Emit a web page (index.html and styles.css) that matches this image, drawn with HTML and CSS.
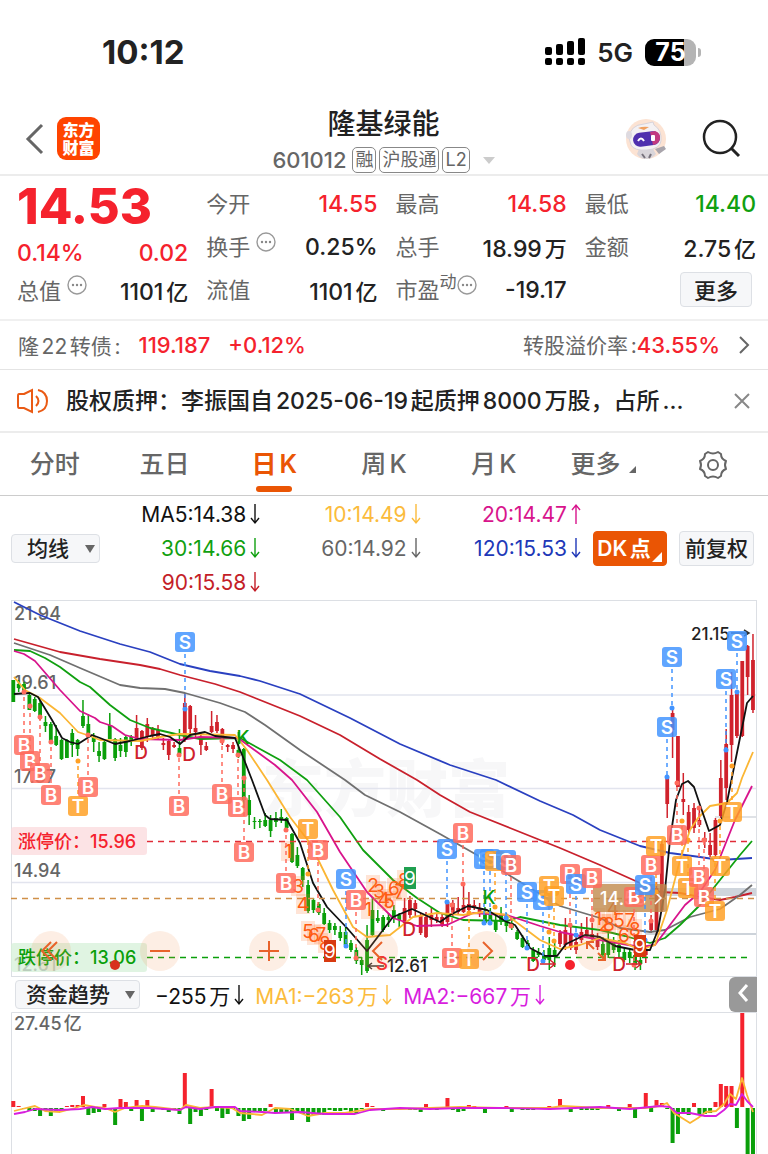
FILE: index.html
```html
<!DOCTYPE html>
<html lang="zh-CN">
<head>
  <meta charset="UTF-8" />
  <meta name="viewport" content="width=device-width, initial-scale=1.0" />
  <title>隆基绿能 601012</title>
  <link rel="stylesheet" href="styles.css">
</head>
<body>
  <div class="status">
    <span class="time">10:12</span>
    <div class="status-right">
      <svg width="40" height="28" viewBox="0 0 40 28">
        <rect x="0" y="9" width="7" height="8" rx="2"/><rect x="11" y="6" width="7" height="11" rx="2"/>
        <rect x="22" y="3" width="7" height="14" rx="2"/><rect x="33" y="0" width="7" height="17" rx="2"/>
        <rect x="0" y="20" width="7" height="7" rx="2"/><rect x="11" y="20" width="7" height="7" rx="2"/>
        <rect x="22" y="20" width="7" height="7" rx="2"/><rect x="33" y="20" width="7" height="7" rx="2"/>
      </svg>
      <span class="net">5G</span>
      <span class="battery">75</span>
    </div>
  </div>

  <header class="header">
    <div class="header-left">
      <button class="icon-btn" aria-label="返回">
        <svg width="20" height="32" viewBox="0 0 20 32"><path d="M17 2L3 16l14 14" fill="none" stroke="#666" stroke-width="3"/></svg>
      </button>
      <a class="logo" href="#">东方<br>财富</a>
    </div>
    <div class="header-title">
      <h1>隆基绿能</h1>
      <div class="code">
        <span>601012</span><i class="chip">融</i><i class="chip">沪股通</i><i class="chip">L2</i><b class="caret"></b>
      </div>
    </div>
    <div class="header-right">
      <button class="icon-btn" aria-label="助手">
        <svg width="42" height="42" viewBox="0 0 42 42">
          <circle cx="21" cy="21" r="20" fill="#fce3d3"/>
          <path d="M14 31q7-3 14 0l3 5q-4 5-10 5t-9-5z" fill="#d9d5da"/>
          <path d="M30 31l9-3 2 3-7 5z" fill="#a9a5ac"/>
          <path d="M17 36l3 4M26 36l-2 4" stroke="#77727c" stroke-width="2"/>
          <path d="M4 20Q5 7 19 6l9-2 1 3q8 5 7 16-1 8-14 9-13 1-16-5z" fill="#f4f1f3" stroke="#d8d3da"/>
          <path d="M13 10q5-2 11-1l-5 3z" fill="#f0a060"/>
          <ellipse cx="4" cy="17" rx="3" ry="4" fill="#dedae0"/>
          <rect x="8" y="14" width="27" height="14" rx="7" fill="#4f2fae" transform="rotate(-7 21 21)"/>
          <path d="M25 14l5-1q6 2 5 8-1 5-7 6z" fill="#c23a80"/>
          <path d="M13 23q3-5 6 0" fill="none" stroke="#fff" stroke-width="2"/>
          <rect x="26" y="17" width="4" height="6" rx="1" fill="#fff"/>
        </svg>
      </button>
      <button class="icon-btn" aria-label="搜索">
        <svg width="40" height="40" viewBox="0 0 40 40"><circle cx="18" cy="18" r="16" fill="none" stroke="#222" stroke-width="2.5"/><path d="M29 29l8 8" stroke="#222" stroke-width="3"/></svg>
      </button>
    </div>
  </header>

  <section class="quote">
    <div class="col first">
      <div class="price">14.53</div>
      <div class="row red"><span>0.14%</span><span>0.02</span></div>
      <div class="row"><label>总值<svg class="tip"><use href="#dots"/></svg></label><span>1101<small>亿</small></span></div>
    </div>
    <div class="col">
      <div class="row"><label>今开</label><span class="red">14.55</span></div>
      <div class="row"><label>换手<svg class="tip"><use href="#dots"/></svg></label><span>0.25%</span></div>
      <div class="row"><label>流值</label><span>1101<small>亿</small></span></div>
    </div>
    <div class="col">
      <div class="row"><label>最高</label><span class="red">14.58</span></div>
      <div class="row"><label>总手</label><span>18.99<small>万</small></span></div>
      <div class="row"><label>市盈<sup>动</sup><svg class="tip near"><use href="#dots"/></svg></label><span>-19.17</span></div>
    </div>
    <div class="col">
      <div class="row"><label>最低</label><span class="green">14.40</span></div>
      <div class="row"><label>金额</label><span>2.75<small>亿</small></span></div>
      <div class="row end"><button class="btn more">更多</button></div>
    </div>
  </section>

  <a class="bond" href="#">
    <span class="grey">隆22转债:</span>
    <b class="red">119.187</b>
    <b class="red">+0.12%</b>
    <span class="grey bond-rate">转股溢价率:<b class="red">43.55%</b></span>
    <svg width="12" height="20" viewBox="0 0 12 20"><path d="M2 2l8 8-8 8" fill="none" stroke="#666" stroke-width="2"/></svg>
  </a>

  <div class="notice">
    <svg width="32" height="26" viewBox="0 0 32 26" fill="none" stroke="#ea5a14" stroke-width="2">
      <path d="M7 6L15 2v22l-8-4H2q-1 0-1-2V8q0-2 1-2zM15 2v22"/><path d="M19 8q5 5 0 10M21 2q9 2 9 11t-9 11"/>
    </svg>
    <p>股权质押：李振国自2025-06-19起质押8000万股，占所...</p>
    <button class="icon-btn" aria-label="关闭">
      <svg width="16" height="16" viewBox="0 0 16 16"><path d="M1 1l14 14M15 1L1 15" stroke="#888" stroke-width="2"/></svg>
    </button>
  </div>

  <nav class="tabs">
    <a href="#">分时</a>
    <a href="#">五日</a>
    <a href="#" class="active">日K</a>
    <a href="#">周K</a>
    <a href="#">月K</a>
    <a href="#" class="has-more">更多</a>
    <button class="icon-btn" aria-label="设置">
      <svg width="30" height="30" viewBox="0 0 30 30" fill="none" stroke="#666" stroke-width="2" stroke-linejoin="round">
        <path d="M10 2q5 3 10 0l3 2q0 5 5 7-2 4 0 8-5 2-5 7l-3 2q-5-3-10 0l-3-2q0-5-5-7 2-4 0-8 5-2 5-7z"/><circle cx="15" cy="15" r="5"/>
      </svg>
    </button>
  </nav>

  <div class="ma">
    <span class="select"><select aria-label="主图指标"><option>均线</option></select></span>
    <div class="ma-grid">
      <span class="c5">MA5:14.38<svg class="arr"><use href="#down"/></svg></span>
      <span class="c10">10:14.49<svg class="arr"><use href="#down"/></svg></span>
      <span class="c20">20:14.47<svg class="arr"><use href="#up"/></svg></span>
      <span class="c30">30:14.66<svg class="arr"><use href="#down"/></svg></span>
      <span class="c60">60:14.92<svg class="arr"><use href="#down"/></svg></span>
      <span class="c120">120:15.53<svg class="arr"><use href="#down"/></svg></span>
      <span class="c90">90:15.58<svg class="arr"><use href="#down"/></svg></span>
    </div>
    <button class="btn dk">DK点</button>
    <button class="btn fq">前复权</button>
  </div>

  <div class="chart">
    <svg id="kline" viewBox="11 600 746 377"></svg>
    <div class="controls">
      <button aria-label="最早"><svg viewBox="0 0 40 40"><path d="M20 11l-9 9 9 9M26 11l-9 9 9 9"/></svg></button>
      <button aria-label="缩小"><svg viewBox="0 0 40 40"><path d="M10 20h20"/></svg></button>
      <button aria-label="放大"><svg viewBox="0 0 40 40"><path d="M10 20h20M20 10v20"/></svg></button>
      <button aria-label="左移"><svg viewBox="0 0 40 40"><path d="M24 11l-9 9 9 9"/></svg></button>
      <button aria-label="右移"><svg viewBox="0 0 40 40"><path d="M16 11l9 9-9 9"/></svg></button>
      <button aria-label="全屏"><svg viewBox="0 0 40 40"><path d="M18 18l-7-7M11 18v-7h7M22 22l7 7M22 29h7v-7"/></svg></button>
    </div>
  </div>

  <div class="fund-bar">
    <span class="select wide"><select aria-label="副图指标"><option>资金趋势</option></select></span>
    <span class="c5">−255万<svg class="arr"><use href="#down"/></svg></span>
    <span class="c10">MA1:−263万<svg class="arr"><use href="#down"/></svg></span>
    <span class="cm2">MA2:−667万<svg class="arr"><use href="#down"/></svg></span>
    <button class="fold" aria-label="展开"><svg width="12" height="18" viewBox="0 0 12 18"><path d="M10 1L3 9l7 8" fill="none" stroke="#fff" stroke-width="3"/></svg></button>
  </div>
  <div class="chart fund">
    <svg id="fund" viewBox="11 1012 746 142"></svg>
  </div>

  <svg class="defs" aria-hidden="true">
    <symbol id="dots" viewBox="0 0 20 20"><circle cx="10" cy="10" r="9" fill="none" stroke="#999" stroke-width="1.4"/><circle cx="6" cy="10" r="1.2" fill="#888"/><circle cx="10" cy="10" r="1.2" fill="#888"/><circle cx="14" cy="10" r="1.2" fill="#888"/></symbol>
    <symbol id="down" viewBox="0 0 10 22"><path d="M5 1v19M1 15l4 5 4-5" fill="none" stroke="currentColor" stroke-width="1.4"/></symbol>
    <symbol id="up" viewBox="0 0 10 22"><path d="M5 21V2M1 7l4-5 4 5" fill="none" stroke="currentColor" stroke-width="1.4"/></symbol>
  </svg>
  <script src="chart.js"></script>
</body>
</html>
```

FILE: styles.css
```css
* {
  box-sizing: border-box;
}
body {
  margin: 0;
  background: #fff;
  color: #222;
  font-family: Inter, "Noto Sans CJK SC", sans-serif;
  text-autospace: normal;
  overflow: hidden;
}
button {
  font-family: inherit;
  cursor: pointer;
}
a {
  color: inherit;
  text-decoration: none;
}
.red { color: #f5222d; }
.green { color: #10a010; }
.grey { color: #666; }
.defs {
  display: none;
}
.icon-btn {
  display: flex;
  padding: 0;
  border: none;
  background: none;
}

/* status bar */
.status {
  display: flex;
  justify-content: space-between;
  align-items: center;
  height: 100px;
  padding: 4px 68px 0 102px;
}
.time {
  font-size: 33px;
  font-weight: 700;
}
.status-right {
  display: flex;
  align-items: center;
  gap: 12px;
}
.net {
  font-size: 26px;
  font-weight: 600;
}
.battery {
  position: relative;
  width: 51px;
  height: 27px;
  margin-right: 4px;
  border-radius: 9px;
  background: linear-gradient(90deg, #000 76%, #b4b4b4 76%);
  color: #fff;
  font-size: 25px;
  font-weight: 700;
  line-height: 27px;
  text-align: center;
}
.battery::after {
  content: "";
  position: absolute;
  right: -5px;
  top: 9px;
  width: 3px;
  height: 9px;
  border-radius: 0 3px 3px 0;
  background: #b4b4b4;
}

/* header */
.header {
  display: grid;
  grid-template-columns: 1fr auto 1fr;
  align-items: center;
  height: 76px;
  padding: 0 26px 4px 25px;
  border-bottom: 2px solid #ececec;
}
.header-left,
.header-right {
  display: flex;
  align-items: center;
}
.header-left {
  gap: 12px;
}
.header-right {
  justify-content: flex-end;
  gap: 35px;
}
.logo {
  width: 43px;
  height: 43px;
  padding-top: 4px;
  border-radius: 9px;
  background: #ff4400;
  color: #fff;
  font-size: 16px;
  font-weight: 900;
  line-height: 18px;
  text-align: center;
}
.header-title {
  padding-top: 5px;
  text-align: center;
}
h1 {
  margin: 0;
  font-size: 28px;
  font-weight: 500;
  line-height: 38px;
}
.code {
  display: flex;
  align-items: center;
  gap: 3px;
  height: 34px;
  color: #666;
  font-size: 22px;
  font-weight: 500;
}
.code span {
  margin-right: 3px;
}
.chip {
  height: 26px;
  padding: 0 2px;
  border: 1px solid #888;
  border-radius: 5px;
  font-size: 18px;
  font-style: normal;
  font-weight: 400;
  line-height: 24px;
}
.caret {
  margin-left: 10px;
  border: 6px solid transparent;
  border-top: 7px solid #ccc;
  border-bottom: 0;
}

/* quote */
.quote {
  display: grid;
  grid-template-columns: repeat(4, 1fr);
  gap: 18px;
  height: 145px;
  padding: 6px 12px 0 17px;
  border-bottom: 2px solid #f0f0f0;
  font-size: 23px;
  font-weight: 500;
}
.row {
  display: flex;
  justify-content: space-between;
  align-items: center;
  height: 43px;
  white-space: nowrap;
}
.row label {
  display: flex;
  align-items: center;
  margin-bottom: 3px;
  color: #666;
  font-size: 22px;
  font-weight: 400;
}
.row small {
  font-size: 22px;
}
.row.end {
  justify-content: flex-end;
}
.first .row:last-child {
  height: 32px;
}
.price {
  height: 49px;
  color: #f5222d;
  font-size: 49px;
  font-weight: 800;
  line-height: 50px;
}
.tip {
  width: 20px;
  height: 20px;
  margin: 0 0 7px 6px;
}
.tip.near {
  margin-left: 0;
}
sup {
  font-size: 17px;
  line-height: 20px;
  margin-bottom: 12px;
}
.btn {
  padding: 0;
  border: 1px solid #dde0e5;
  border-radius: 4px;
  background: #f6f7f9;
  color: #222;
  font-weight: 500;
}
.more {
  width: 72px;
  height: 35px;
  margin-right: 4px;
  padding-bottom: 4px;
  font-size: 22px;
}

/* convertible bond */
.bond {
  display: flex;
  align-items: center;
  gap: 18px;
  height: 49px;
  padding: 0 18px;
  border-bottom: 1px solid #e4e4e4;
  font-size: 21px;
}
.bond b {
  font-size: 22px;
  font-weight: 500;
}
.bond-rate {
  margin: 0 0 3px auto;
}

/* notice */
.notice {
  display: flex;
  align-items: center;
  height: 63px;
  padding: 0 18px 0 17px;
  border-bottom: 2px solid #ececec;
}
.notice p {
  flex: 1;
  margin: 0 0 4px 17px;
  overflow: hidden;
  font-size: 23px;
  font-weight: 500;
  white-space: nowrap;
}

/* tabs */
.tabs {
  display: grid;
  grid-template-columns: repeat(7, 1fr);
  height: 63px;
  border-bottom: 1px solid #ccc;
  color: #666;
  font-size: 25px;
  font-weight: 500;
  line-height: 63px;
  text-align: center;
}
.tabs .icon-btn {
  align-items: center;
  justify-content: center;
}
.tabs .active {
  position: relative;
  color: #ea5504;
  font-weight: 600;
}
.tabs .active::after {
  content: "";
  position: absolute;
  left: 50%;
  bottom: 4px;
  width: 36px;
  height: 6px;
  margin-left: -18px;
  border-radius: 3px;
  background: #ea5504;
}
.has-more::after {
  content: "";
  display: inline-block;
  margin-left: 9px;
  border-left: 7px solid transparent;
  border-bottom: 7px solid #666;
}

/* moving averages */
.ma {
  display: flex;
  align-items: center;
  height: 104px;
  padding: 0 14px 0 11px;
}
.select {
  position: relative;
  width: 89px;
}
.select select {
  width: 100%;
  height: 29px;
  padding: 0 0 0 15px;
  border: 1px solid #dde0e5;
  border-radius: 4px;
  background: #f6f7f9;
  color: #222;
  font: 500 21px Inter, "Noto Sans CJK SC", sans-serif;
  line-height: 27px;
  appearance: none;
}
.select::after {
  content: "";
  position: absolute;
  right: 5px;
  top: 11px;
  border: 5px solid transparent;
  border-top: 8px solid #666;
  border-bottom: 0;
}
.select.wide {
  width: 125px;
  margin-right: 15px;
}
.wide select {
  padding-left: 10px;
}
.ma-grid {
  flex: 1;
  display: grid;
  grid-template-columns: repeat(3, 1fr);
  grid-auto-rows: 34px;
  font-size: 21px;
}
.ma-grid span {
  display: flex;
  align-items: center;
  justify-content: flex-end;
}
.arr {
  width: 10px;
  height: 22px;
  margin-left: 4px;
}
.c5 { color: #111; }
.c10 { color: #fbbb3c; }
.c20 { color: #d8148c; }
.c30 { color: #10a010; }
.c60 { color: #666; }
.c90 { color: #c41e28; }
.c120 { color: #2038b8; }
.cm2 { color: #d81ede; }
.dk,
.fq {
  height: 35px;
  padding-bottom: 3px;
  font-size: 21px;
}
.dk {
  position: relative;
  width: 74px;
  margin: 0 12px;
  padding-right: 12px;
  border-color: #ea5504;
  background: #ea5504;
  color: #fff;
  font-weight: 600;
}
.dk::after {
  content: "";
  position: absolute;
  right: 4px;
  bottom: 3px;
  border-left: 10px solid transparent;
  border-bottom: 10px solid #fff;
}
.fq {
  width: 75px;
}

/* charts */
.chart {
  position: relative;
  margin: 0 11px;
}
.chart > svg {
  display: block;
  width: 100%;
}
.controls {
  position: absolute;
  left: 20px;
  right: 141px;
  bottom: 6px;
  display: flex;
  justify-content: space-between;
}
.controls button {
  display: flex;
  width: 40px;
  height: 40px;
  padding: 0;
  border: none;
  border-radius: 50%;
  background: rgba(245, 150, 90, 0.16);
}
.controls svg {
  width: 40px;
  fill: none;
  stroke: #e8622a;
  stroke-width: 2;
}
.fund-bar {
  display: flex;
  align-items: center;
  height: 35px;
  padding: 0 11px 0 15px;
  font-size: 21px;
}
.fund-bar > span:not(.select) {
  display: flex;
  align-items: center;
  margin-right: 11px;
  white-space: nowrap;
}
.fold {
  width: 28px;
  height: 35px;
  margin-left: auto;
  padding: 0;
  border: none;
  border-radius: 6px 0 0 6px;
  background: #999;
}

/* chart text */
.axis {
  fill: #666;
  font-size: 18px;
  font-weight: 500;
}
.limit {
  font-size: 18px;
  font-weight: 500;
}
.mark {
  fill: #fff;
  font-size: 19px;
  font-weight: 600;
  text-anchor: middle;
}
.num {
  fill: #ff5a10;
  font-size: 19px;
  text-anchor: middle;
}
.num.nine {
  fill: #fff;
}
.dk-sign {
  font-size: 19px;
  font-weight: 500;
  text-anchor: middle;
}
.peak {
  fill: #222;
  font-size: 17px;
  font-weight: 500;
}
.watermark {
  fill: #f7f7f8;
  font-size: 62px;
  font-weight: 900;
}
```

FILE: chart.js
```js
const RED = "#d0222c", GREEN = "#0a9f0a";
const X0 = 13.3, STEP = 5.36;
const xOf = i => X0 + STEP * i;

// high, body top, body bottom, low
const candles = [
  [680,680,702,702],[680,684,688,692],[682,684,693,693],[692,695,710,710],[697,699,711,712],[700,703,719,720],[716,722,726,732],[722,724,743,743],
  [725,736,745,746],[739,740,759,760],[739,740,758,758],[729,733,745,757],[739,740,749,756],[700,716,726,728],[714,724,736,738],[733,737,742,752],
  [742,751,756,762],[740,742,759,760],[713,725,739,739],[738,739,758,761],[738,745,751,757],[735,737,752,757],[735,737,741,746],[715,728,739,741],
  [730,731,748,750],[718,724,737,742],[727,729,736,738],[725,730,738,740],[738,743,745,750],[740,741,755,760],[742,745,747,748],[729,748,754,757],
  [694,703,740,742],[705,706,729,735],[715,728,732,737],[733,738,745,755],[742,746,750,751],[711,726,732,733],[715,722,731,733],[728,729,741,745],
  [744,745,747,752],[742,745,749,753],[732,750,756,758],[748,749,800,808],[795,800,815,825],[817,821,822,829],[819,821,822,828],[813,820,826,827],
  [815,820,831,837],[812,818,822,827],[809,817,820,823],[817,818,828,830],[833,834,862,863],[847,855,866,868],[867,868,880,887],[880,885,911,913],
  [898,900,910,913],[902,904,913,915],[908,913,924,925],[920,923,930,933],[923,926,930,935],[926,932,938,941],[927,932,945,947],[940,943,950,952],
  [947,950,961,964],[957,960,965,975],[925,940,971,973],[897,910,935,937],[910,918,921,923],[915,917,930,932],[913,917,920,927],[905,910,918,923],
  [913,915,920,927],[898,908,923,923],[896,900,915,918],[900,903,909,917],[913,915,933,935],[912,917,937,938],[908,915,920,927],[913,917,920,923],
  [913,917,925,927],[900,902,922,927],[900,903,912,917],[897,908,912,915],[884,905,912,913],[892,904,910,913],[900,905,908,910],[903,908,912,917],
  [907,913,923,925],[908,914,920,925],[913,920,930,932],[907,914,922,925],[913,916,926,932],[920,923,928,930],[930,932,939,940],[935,938,947,948],
  [940,943,948,950],[947,950,961,962],[948,952,955,957],[950,955,960,963],[937,948,960,970],[940,950,957,967],[930,933,944,947],[918,930,945,950],
  [923,935,948,950],[935,942,950,954],[923,932,940,943],[917,930,936,937],[923,934,938,940],[933,940,947,950],[937,944,955,958],[930,940,955,958],
  [937,940,950,953],[940,945,952,957],[947,952,960,962],[948,952,958,963],[950,955,965,970],[957,960,964,970],[947,949,955,963],[915,921,930,933],
  [882,888,930,935],[840,844,910,912],[777,777,804,818],[708,713,730,758],[736,736,787,787],[773,799,802,815],[805,812,830,833],[803,808,828,833],
  [808,820,825,827],[832,838,842,848],[833,845,855,857],[818,820,855,857],[760,778,816,818],[729,744,788,800],[672,695,745,762],[692,694,736,738],
  [661,661,736,737],[645,646,677,695],[634,660,710,713]
];
const isUp = i => (i >= 23 && i <= 30) || (i >= 32 && i <= 41) || (i >= 73 && i <= 87) || (i >= 102 && i <= 109) || i >= 118;

const lines = {
  "#2a40c0": "14,602 40,615 80,631 120,644 150,652 180,664 210,671 240,676 260,681 300,694 350,718 400,744 450,765 496,780 540,801 573,815 600,830 640,846 670,853 700,857 720,860 752,858",
  "#c8202c": "14,639 60,652 100,659 140,665 160,669 180,675 215,684 240,692 260,700 300,716 340,735 380,759 417,780 440,795 470,812 510,828 560,848 600,865 640,883 660,892 680,893 700,897 720,900 735,897 752,893",
  "#707070": "14,643 50,655 80,668 120,685 140,688 165,689 185,693 220,703 245,712 265,725 300,750 345,780 365,795 400,812 440,834 477,855 512,877 560,906 600,918 620,928 650,932 665,930 690,917 720,909 740,895 752,885",
  "#10a010": "14,650 30,651 45,658 60,667 80,682 90,687 110,705 130,720 150,728 180,735 200,739 240,738 260,749 280,760 307,780 340,817 363,850 393,880 417,898 440,913 463,920 507,921 520,917 560,925 600,930 625,936 650,943 665,938 680,925 700,905 720,880 740,855 752,841",
  "#d8148c": "14,651 24,654 35,661 60,690 80,711 95,718 100,722 112,726 125,735 140,739 180,740 200,737 238,738 260,754 275,765 292,780 317,812 340,852 367,892 393,918 417,926 447,925 473,913 507,915 540,926 560,932 600,940 640,947 655,945 670,925 685,905 700,892 715,870 735,820 752,786",
  "#fbb634": "14,677 25,690 40,698 60,713 78,732 90,736 100,740 140,741 160,737 180,734 235,735 247,750 267,780 290,817 310,843 333,890 353,927 367,937 390,935 413,917 437,913 463,915 483,912 507,915 540,940 560,949 580,945 600,938 625,943 640,950 655,945 667,910 680,860 690,830 698,818 710,806 727,803 737,793 742,778 753,752",
  "#111": "14,694 30,693 38,697 52,720 62,738 70,742 78,744 92,735 100,738 115,744 130,741 150,736 160,734 170,737 180,744 190,735 205,732 215,736 235,738 243,757 252,780 265,815 270,819 287,820 300,843 313,883 327,907 347,928 367,951 383,930 393,917 412,909 423,914 440,922 450,915 468,906 487,910 507,922 515,925 530,948 545,956 557,956 566,944 585,935 600,937 615,946 635,950 650,950 658,930 665,890 670,840 676,800 682,784 688,781 694,787 700,805 709,831 720,825 727,802 742,728 747,703 753,696"
};

// type, x, y, y of the trade on the candle
const marks = [
  ["B",24,745,692],["B",30,761,706],["B",40,773,717],["B",51,795,742],["T",78,806,761],["B",88,787,735],["S",185,642,709],["B",179,806,755],
  ["B",222,794,741],["B",238,807,755],["B",244,852,778],["B",286,883,830],["T",308,829,874],["B",318,850,910],["S",346,879,946],["B",356,900,958],
  ["S",447,849,902],["B",463,833,884],["B",452,958,905],["T",469,959,913],["S",484,859,923],["S",490,859,923],["T",495,861,907],["S",506,860,918],
  ["B",511,865,926],["S",527,892,948],["S",543,900,961],["T",549,886,932],["T",554,896,941],["B",570,874,925],["S",576,884,935],["B",592,878,920],
  ["B",634,897,965],["B",651,865,921],["S",645,885,940],["T",656,846,892],["S",672,657,708],["S",667,727,777],["B",677,835,783],["T",682,866,821],
  ["T",688,888,840],["B",699,877,808],["B",704,897,840],["T",720,866,821],["T",715,911,860],["T",732,812,766],["S",726,679,750],["S",737,641,692]
];
const markColor = { B: "#ff6a5c", S: "#4294ff", T: "#ffa024" };

const nums = [
  [1,288,851],[3,298,886],[4,303,904],[5,308,931],[6,314,935],[7,321,934],[8,325,943],
  [1,368,909],[2,373,885],[3,379,891],[4,384,899],[5,389,901],[6,394,888],[7,400,891],[8,404,880],
  [1,598,918],[2,604,924],[8,609,924],[4,613,908],[5,619,920],[7,630,920],[6,624,935],[8,635,929]
];
const nines = [[330,951,"#d83a10"],[410,878,"#1fa050"],[640,946,"#d83a10"]];

const dkSigns = [
  ["D",141,759,RED],["D",189,761,RED],["K",243,744,GREEN],["D",409,936,RED],["K",489,904,GREEN],["D",533,971,RED],["D",619,971,RED]
];

const line = (x1, y1, x2, y2, c, w = 1, dash = "") =>
  `<line x1="${x1}" y1="${y1}" x2="${x2}" y2="${y2}" stroke="${c}" stroke-width="${w}" stroke-dasharray="${dash}"/>`;
const rect = (x, y, w, h, c, r = 0, o = 1) =>
  `<rect x="${x}" y="${y}" width="${w}" height="${h}" fill="${c}" rx="${r}" opacity="${o}"/>`;
const text = (x, y, cls, t, c = "") =>
  `<text x="${x}" y="${y}" class="${cls}" ${c ? `style="fill:${c}"` : ""}>${t}</text>`;

function drawKline() {
  let s = "";
  s += text(262, 812, "watermark", "东方财富");
  [695, 788.5, 882.5].forEach(y => s += line(11, y, 757, y, "#e2e4ee", 1.3));
  s += line(715, 817, 757, 817, "#d4d8de", 1.5) + line(645, 934, 757, 934, "#cdd3da", 2);
  s += rect(645, 888, 112, 8, "#cfd5dc");
  s += `<rect x="11.5" y="600.5" width="745" height="376" fill="none" stroke="#dcdfe4"/>`;
  [["21.94", 620], ["19.61", 689], ["17.37", 783], ["14.94", 877], ["12.61", 971]].forEach(a => s += text(14, a[1], "axis", a[0]));

  candles.forEach(([h, t, b, l], i) => {
    const c = isUp(i) ? RED : GREEN, x = xOf(i);
    s += line(x, h, x, l, c, 1.5) + rect(x - 1.9, t, 3.8, Math.max(b - t, 1), c);
  });

  for (const c in lines) s += `<polyline points="${lines[c]}" fill="none" stroke="${c}" stroke-width="1.8" stroke-linejoin="round"/>`;

  s += rect(11, 827, 136, 28, "#fbdadc", 3, 0.75) + rect(11, 943, 136, 29, "#d6f0d8", 3, 0.75);
  s += text(18, 848, "limit", "涨停价：15.96", "#f5222d") + text(18, 964, "limit", "跌停价：13.06", GREEN);
  s += line(147, 841.5, 752, 841.5, "#e02c38", 1.6, "6 5");
  s += line(11, 898.5, 757, 898.5, "#d09048", 1.6, "6 5");
  s += line(147, 957.5, 752, 957.5, GREEN, 1.6, "6 5");

  s += text(387, 972, "peak", "12.61") + text(691, 640, "peak", "21.15");
  s += `<path d="M384 966h-16m4-3l-4 3 4 3M731 633h18m-5-3l5 3-5 3" fill="none" stroke="#333" stroke-width="1.5"/>`;

  nums.forEach(([n, x, y]) => s += rect(x - 7, y - 10, 14, 20, "#ff7830", 0, 0.2) + text(x, y + 7, "num", n));
  s += rect(593, 884, 74, 28, "#c08a4c", 3, 0.8) + text(600, 905, "limit", "14.53", "#fff");
  s += `<path d="M655 892l6 6-6 6" fill="none" stroke="#fff" stroke-width="1.5"/>`;

  marks.forEach(([k, x, y, a]) => {
    const c = markColor[k];
    const from = a < y ? y - 12 : y + 12;
    s += line(x, from, x, a, c, 1.5, "4 4") + `<circle cx="${x}" cy="${a}" r="2.5" fill="${c}"/>`;
  });
  marks.forEach(([k, x, y]) => {
    s += rect(x - 10, y - 10, 20, 20, markColor[k], 3, 0.84) + text(x, y + 7, "mark", k);
  });
  nines.forEach(([x, y, c]) => s += rect(x - 6, y - 11, 12, 22, c) + text(x, y + 7, "num nine", 9));
  dkSigns.forEach(([k, x, y, c]) => s += text(x, y, "dk-sign", k, c));
  s += text(382, 970, "dk-sign", "S", "#f5222d");

  s += `<path d="M540 964h14m-4-4l5 4-5 4M626 964h14m-4-4l5 4-5 4" fill="none" stroke="${RED}" stroke-width="1.5"/>`;
  s += `<circle cx="115" cy="965" r="5" fill="#d8301c"/><circle cx="570" cy="965" r="5" fill="#f5222d"/>`;
  document.getElementById("kline").innerHTML = s;
}

// daily capital flow, pixels from the zero line
const flow = [
  6,1,-1,-3,-3,-8,-3,-8,-3,-2,1,2,2,11,-7,-5,-4,3,-2,-17,8,5,-3,7,-13,7,-4,-1,-2,-4,-2,-6,
  34,-16,-4,-8,-2,18,-3,-10,-6,-1,-8,-13,-11,-4,-3,-3,3,-4,-4,-5,-12,-5,-6,-14,-7,-7,-7,-2,-3,-3,-2,-4,
  -6,-1,4,1,-1,-3,-2,-1,-1,-1,-2,-2,-4,3,-1,-2,-1,9,-2,-4,-3,2,1,-1,-5,-1,-1,-1,1,-4,-1,-2,
  -2,-2,-1,-1,1,-1,8,-1,-4,1,-2,-2,-2,-2,-1,2,-1,-3,-1,3,-10,-1,14,-4,7,4,-1,-35,-26,-6,
  -7,4,-6,-6,-5,5,23,21,21,-20,94,-46,-46
];
const fundLines = {
  "#fbb634": "14,1111 22,1109 35,1106 45,1111 60,1112 75,1108 84,1105 95,1107 105,1108 115,1112 125,1108 142,1106 155,1107 180,1110 186,1105 200,1108 215,1107 232,1108 240,1113 262,1115 275,1108 290,1109 308,1116 325,1113 345,1113 370,1109 400,1109 430,1108 460,1107 500,1108 550,1108 562,1106 600,1108 645,1108 660,1106 667,1103 674,1113 682,1118 690,1123 698,1118 706,1112 716,1111 724,1104 730,1094 736,1099 742,1078 747,1095 753,1112",
  "#d81ede": "14,1114 25,1112 35,1109 60,1110 80,1109 92,1107 105,1109 120,1108 150,1108 180,1110 186,1107 200,1109 215,1107 235,1107 240,1111 262,1112 275,1113 300,1112 325,1114 355,1114 370,1110 400,1108 430,1109 460,1108 500,1108 550,1109 600,1107 630,1109 660,1106 670,1107 677,1113 690,1113 705,1116 716,1116 724,1110 730,1104 736,1105 742,1094 747,1101 753,1107"
};

function drawFund() {
  let s = `<path d="M11.5 1154V1012.5h745V1154" fill="none" stroke="#dcdfe4"/>`;
  s += text(14, 1030, "axis", "27.45亿");
  flow.forEach((v, i) => {
    s += rect(xOf(i) - 2, v > 0 ? 1107 - v : 1108, 4, Math.abs(v), v > 0 ? "#f5222d" : GREEN);
  });
  for (const c in fundLines) s += `<polyline points="${fundLines[c]}" fill="none" stroke="${c}" stroke-width="1.8" stroke-linejoin="round"/>`;
  document.getElementById("fund").innerHTML = s;
}

drawKline();
drawFund();
```
